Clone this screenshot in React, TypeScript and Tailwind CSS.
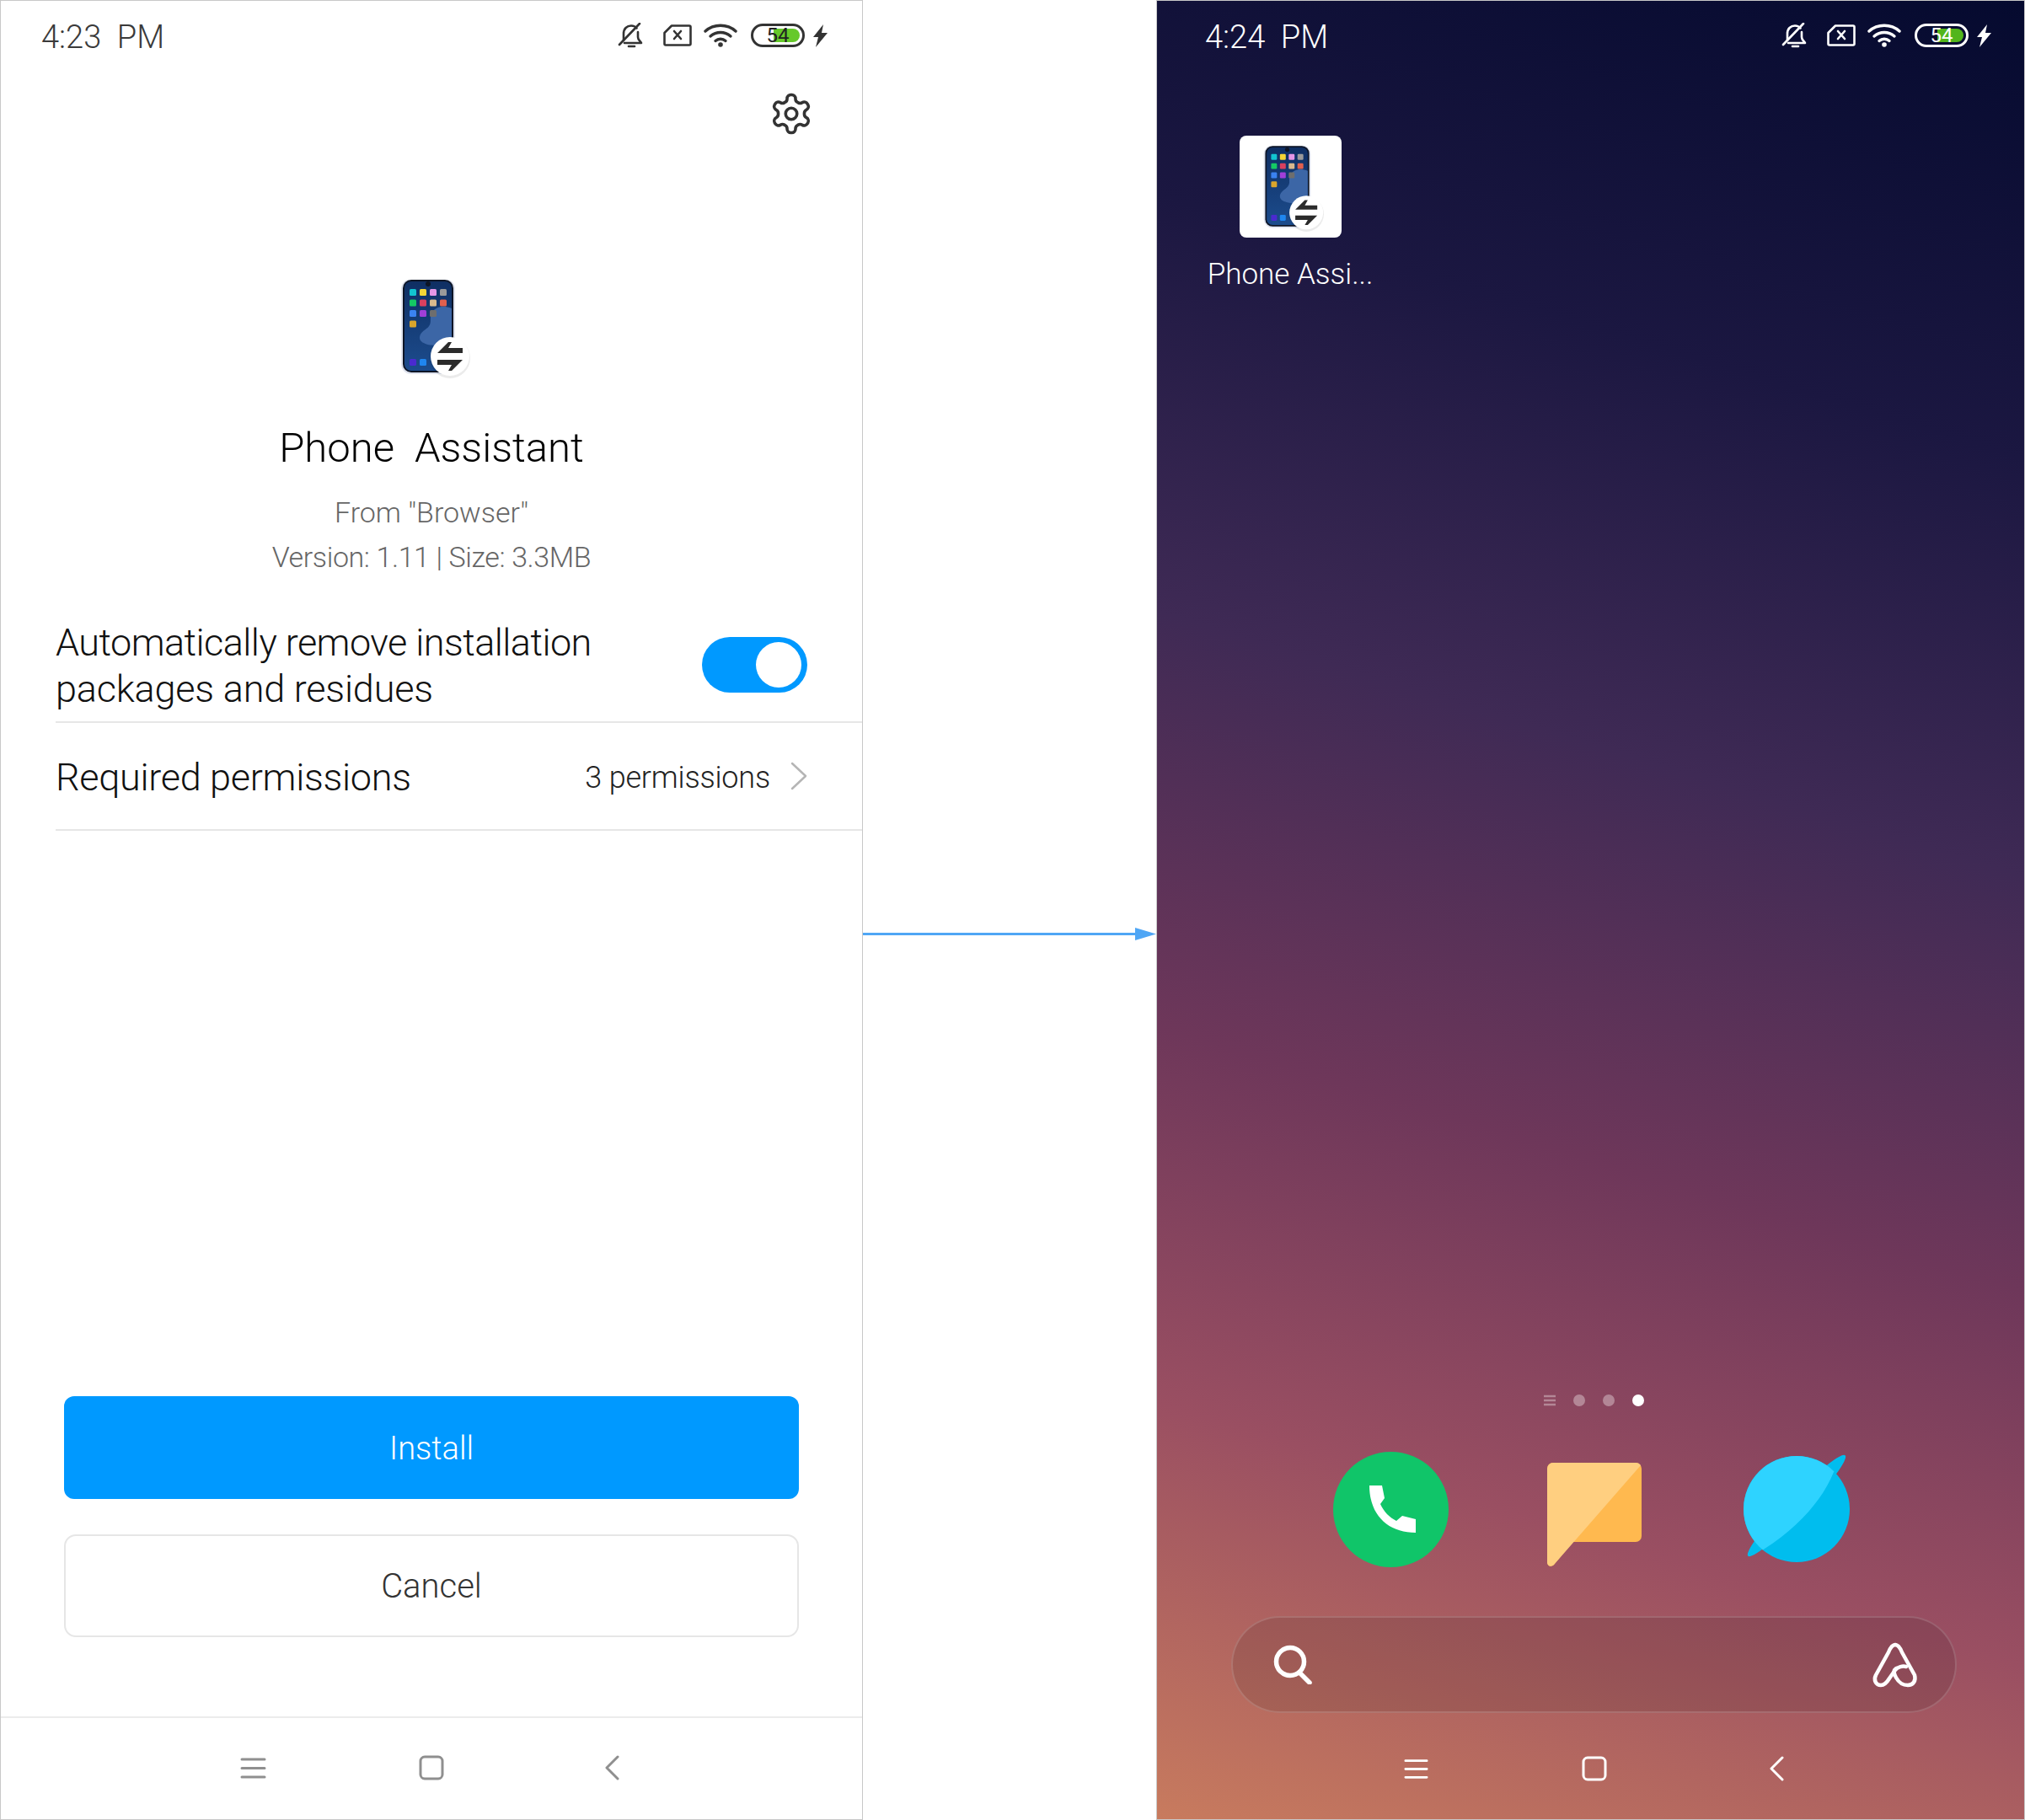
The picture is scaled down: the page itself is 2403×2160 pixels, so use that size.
import React from "react";

const font = { fontFamily: "Roboto, 'Liberation Sans', sans-serif" };

function Bell({ c }: { c: string }) {
  return (
    <svg width="31" height="30" viewBox="0 0 31 30" fill="none" stroke={c} strokeWidth="2.6" strokeLinecap="round" strokeLinejoin="round">
      <path d="M7 21V13C7 7 11 3.5 16 3.5c3 0 5 1 6.5 3" />
      <path d="M24 11v6c0 3 2 4 4 7H8" />
      <path d="M13 28h7" />
      <path d="M26 1 2 26" />
    </svg>
  );
}

function Card({ c }: { c: string }) {
  return (
    <svg width="34" height="26" viewBox="0 0 34 26" fill="none" stroke={c} strokeWidth="2.6" strokeLinecap="round" strokeLinejoin="round">
      <path d="M10 1.5H31a1.5 1.5 0 0 1 1.5 1.5V23a1.5 1.5 0 0 1-1.5 1.5H3A1.5 1.5 0 0 1 1.5 23V10Z" />
      <path d="m13 8 8 9M21 8l-8 9" />
    </svg>
  );
}

function Wifi({ c }: { c: string }) {
  return (
    <svg width="40" height="28" viewBox="0 0 40 28" fill="none" stroke={c} strokeWidth="3.4" strokeLinecap="round">
      <path d="M2 9C12 0 28 0 38 9" />
      <path d="M8 15c7-6 17-6 24 0" />
      <path d="M14 20.500c3.500-3 8.500-3 12 0" />
      <circle cx="20" cy="25" r="2.800" fill={c} stroke="none" />
    </svg>
  );
}

function Bolt({ c }: { c: string }) {
  return (
    <svg width="17" height="27" viewBox="0 0 17 27" fill={c}>
      <path d="M12 0 0 15h6L3 27 17 10h-7Z" />
    </svg>
  );
}

function StatusBar({ time, dark }: { time: string; dark: boolean }) {
  const c = dark ? "#333333" : "#ffffff";
  return (
    <div className={`flex h-[86px] items-center ${dark ? "pl-[48px] pr-[41px] text-[#3a3a3a]" : "pl-[57px] pr-[39px] text-white"}`}>
      <span className="text-[38px] font-light whitespace-pre">{time}</span>
      <div className="ml-auto flex items-center pb-[4px]">
        <Bell c={c} />
        <div className="ml-[23px]"><Card c={c} /></div>
        <div className="ml-[14px]"><Wifi c={c} /></div>
        <div className={`relative ml-[16px] flex h-[28px] w-[64px] items-center justify-center overflow-hidden rounded-full border-[3px] ${dark ? "border-[#333333]" : "border-white"}`}>
          <div className={`absolute top-[3px] bottom-[3px] left-[24px] right-[3px] rounded-r-full ${dark ? "bg-[#66c92a]" : "bg-[#52b51c]"}`} />
          <span className={`relative text-[24px] leading-none ${dark ? "text-[#222222]" : "text-white"}`}>54</span>
        </div>
        <div className="ml-[10px]"><Bolt c={c} /></div>
      </div>
    </div>
  );
}

function AppIcon({ className, id }: { className: string; id: string }) {
  const colors = [
    ["#12c4cf", "#f5d536", "#e596e6", "#9a9a9a"],
    ["#14c964", "#d9405f", "#d9b98d", "#e0604e"],
    ["#3a82f0", "#a03fd8", "#6e6e6e", ""],
    ["#d9a52c", "", "", ""],
  ];
  return (
    <svg viewBox="0 0 92 118" className={className}>
      <defs>
        <linearGradient id={id} x1="0" y1="0" x2="0" y2="1">
          <stop offset="0" stopColor="#0f2f63" />
          <stop offset="1" stopColor="#1c4c8d" />
        </linearGradient>
      </defs>
      <rect x="10" y="-1" width="64" height="113" rx="12" fill="#dfe3ee" />
      <rect x="12" y="0" width="60" height="110" rx="10" fill="#0d1526" />
      <rect x="14" y="2" width="56" height="106" rx="8" fill={`url(#${id})`} />
      <path d="M70 34c-10-4-20-2-24 6-3 7 2 12-6 18-4 3-8 6-8 11 0 7 14 10 24 9 8-1 14-3 14-8Z" fill="#3c66a6" />
      <circle cx="42" cy="5" r="3" fill="#0d1526" />
      {colors.map((row, r) =>
        row.map((col, i) =>
          col ? <rect key={`${r}-${i}`} x={20 + i * 12} y={11 + r * 12.500} width="8" height="8" rx="1.500" fill={col} /> : null,
        ),
      )}
      <rect x="20" y="94" width="8" height="8" rx="1.500" fill="#4a2ad0" />
      <rect x="32" y="94" width="8" height="8" rx="1.500" fill="#1f86f0" />
      <circle cx="68" cy="93" r="24" fill="#000000" opacity="0.08" />
      <circle cx="68" cy="91" r="23" fill="#ffffff" />
      <path d="M53 87h30v-6H66l4-7h-4Z" fill="#2b2b2b" />
      <path d="M83 95H53v6h17l-4 7h4Z" fill="#2b2b2b" />
    </svg>
  );
}

function NavIcons({ c, light }: { c: string; light: boolean }) {
  return (
    <div className="flex items-center">
      <svg width={light ? 29 : 31} height="27" viewBox="0 0 31 27" stroke={c} strokeWidth="3" strokeLinecap="round">
        <path d="M2 3h27M2 13.500h27M2 24h27" />
      </svg>
      <svg width="30" height="30" viewBox="0 0 30 30" fill="none" stroke={c} strokeWidth="3" className={light ? "ml-[182px]" : "ml-[181px]"}>
        <rect x="2" y="2" width="26" height="26" rx="5" />
      </svg>
      <svg width="19" height="30" viewBox="0 0 19 30" fill="none" stroke={c} strokeWidth="3" strokeLinecap="round" strokeLinejoin="round" className={light ? "ml-[192px]" : "ml-[190px]"}>
        <path d="M16 2 3 15l13 13" />
      </svg>
    </div>
  );
}

export default function App() {
  return (
    <div className="flex h-[2160px] w-[2403px] bg-white" style={font}>
      {/* left phone */}
      <div className="flex h-full w-[1024px] shrink-0 flex-col border border-[#c8c8c8] bg-white">
        <StatusBar time="4:23  PM" dark />
        <div className="mt-[21px] flex justify-end pr-[57px]">
          <svg width="54" height="54" viewBox="0 0 24 24" fill="none" stroke="#333333" strokeWidth="1.600" strokeLinecap="round" strokeLinejoin="round">
            <path d="M12.220 2h-.44a2 2 0 0 0-2 2v.18a2 2 0 0 1-1 1.730l-.43.250a2 2 0 0 1-2 0l-.15-.080a2 2 0 0 0-2.730.730l-.22.380a2 2 0 0 0 .730 2.730l.15.100a2 2 0 0 1 1 1.720v.510a2 2 0 0 1-1 1.740l-.15.090a2 2 0 0 0-.730 2.730l.22.380a2 2 0 0 0 2.730.730l.15-.080a2 2 0 0 1 2 0l.43.250a2 2 0 0 1 1 1.730V20a2 2 0 0 0 2 2h.44a2 2 0 0 0 2-2v-.18a2 2 0 0 1 1-1.730l.43-.250a2 2 0 0 1 2 0l.15.080a2 2 0 0 0 2.730-.730l.22-.390a2 2 0 0 0-.730-2.730l-.15-.080a2 2 0 0 1-1-1.740v-.500a2 2 0 0 1 1-1.740l.15-.090a2 2 0 0 0 .730-2.730l-.22-.380a2 2 0 0 0-2.730-.730l-.15.080a2 2 0 0 1-2 0l-.43-.250a2 2 0 0 1-1-1.730V4a2 2 0 0 0-2-2z" />
            <circle cx="12" cy="12" r="3" />
          </svg>
        </div>
        <div className="mt-[170px] flex justify-center">
          <AppIcon id="ph1" className="h-[118px] w-[92px]" />
        </div>
        <div className="mt-[52px] text-center text-[49px] font-light leading-[60px] text-[#000000] whitespace-pre">Phone  Assistant</div>
        <div className="mt-[20px] text-center text-[34px] font-light leading-[53px] text-[#666666]">
          <div>From "Browser"</div>
          <div className="tracking-[-0.4px]">Version: 1.11 | Size: 3.3MB</div>
        </div>
        <div className="mt-[47px] flex items-center justify-between pl-[65px] pr-[65px] pb-[11px]">
          <div className="text-[45px] font-light leading-[55px] text-[#111111]">
            <div className="tracking-[-0.55px]">Automatically remove installation</div>
            <div className="tracking-[-0.2px]">packages and residues</div>
          </div>
          <div className="mb-[3px] flex h-[66px] w-[125px] items-center justify-end rounded-full bg-[#0099ff] pr-[7px]">
            <div className="h-[54px] w-[54px] rounded-full bg-white" />
          </div>
        </div>
        <div className="ml-[65px] flex h-[130px] items-center justify-between border-y-2 border-[#e6e6e6] pr-[65px] pt-[4px]">
          <span className="text-[45px] font-light tracking-[-0.3px] text-[#111111]">Required permissions</span>
          <div className="flex items-center">
            <span className="text-[36px] font-light tracking-[-0.2px] text-[#222222]">3 permissions</span>
            <svg width="20" height="34" viewBox="0 0 20 34" fill="none" stroke="#b5b5b5" strokeWidth="2.500" strokeLinecap="round" strokeLinejoin="round" className="ml-[24px] mb-[4px]">
              <path d="m2 2 16 15L2 32" />
            </svg>
          </div>
        </div>
        <div className="mx-[75px] mt-auto flex h-[122px] items-center justify-center rounded-[12px] bg-[#0099ff] pt-[2px] text-[38px] font-light text-white">Install</div>
        <div className="mx-[75px] mt-[42px] flex h-[122px] items-center justify-center rounded-[14px] border-2 border-[#e6e6e6] pt-[2px] text-[40px] font-light text-[#333333]">Cancel</div>
        <div className="mt-[94px] flex h-[122px] items-start justify-center border-t-2 border-[#ececec] pr-[3px] pt-[44px]">
          <NavIcons c="#8f8f8f" light={false} />
        </div>
      </div>

      {/* arrow */}
      <div className="min-w-0 flex-1 pt-[1100px]">
        <svg width="348" height="16" viewBox="0 0 348 16" className="block">
          <path d="M0 7h326v3H0Z" fill="#4fa6f5" />
          <path d="M323 1 348 8.500 323 16Z" fill="#4fa6f5" />
        </svg>
      </div>

      {/* right phone */}
      <div className="flex h-full w-[1031px] shrink-0 flex-col border border-[#c8c8c8] bg-[linear-gradient(197deg,#050a2f_0%,#1b1741_22%,#3f2a55_42%,#6e375a_62%,#9a4f62_80%,#c87b5e_100%)]">
        <StatusBar time="4:24  PM" dark={false} />
        <div className="ml-[28px] mt-[74px] flex w-[260px] flex-col items-center">
          <div className="flex h-[121px] w-[121px] items-center justify-center rounded-[8px] bg-white pt-[5px]">
            <AppIcon id="ph2" className="h-[103px] w-[80px]" />
          </div>
          <div className="mt-[19px] text-[35px] font-light leading-[50px] text-white">Phone Assi...</div>
        </div>

        <div className="mt-auto flex items-center pl-[459px]">
          <svg width="14" height="14" viewBox="0 0 14 14" stroke="#ffffff" strokeOpacity="0.350" strokeWidth="2.500">
            <path d="M0 2h14M0 7h14M0 12h14" />
          </svg>
          <div className="ml-[21px] h-[14px] w-[14px] rounded-full bg-white/35" />
          <div className="ml-[21px] h-[14px] w-[14px] rounded-full bg-white/35" />
          <div className="ml-[21px] h-[14px] w-[14px] rounded-full bg-white" />
        </div>

        <div className="mt-[54px] flex items-start pl-[209px]">
          <svg width="137" height="137" viewBox="0 0 137 137">
            <circle cx="68.500" cy="68.500" r="68.500" fill="#10c569" />
            <path d="M43 40h15l3 15-5 7c4 9 11 16 19 20l7-6 16 4v16C66 96 43 76 43 40Z" fill="#ffffff" />
          </svg>
          <svg width="112" height="123" viewBox="0 0 112 123" className="ml-[117px] mt-[13px]">
            <path d="M7 0h98a7 7 0 0 1 7 7v80a7 7 0 0 1-7 7H30L8 121c-3 3-8 2-8-3V7a7 7 0 0 1 7-7Z" fill="#ffb94f" />
            <path d="M7 0h98a7 7 0 0 1 6 3L8 121c-3 3-8 2-8-3V7a7 7 0 0 1 7-7Z" fill="#ffcf80" />
          </svg>
          <svg width="126" height="126" viewBox="0 0 126 126" className="ml-[121px] mt-[5px] overflow-visible">
            <defs>
              <clipPath id="planetClip">
                <circle cx="63" cy="63" r="63" />
              </clipPath>
            </defs>
            <ellipse cx="63" cy="59" rx="83" ry="11" transform="rotate(-46 63 59)" fill="#00bdee" />
            <circle cx="63" cy="63" r="63" fill="#00bdee" />
            <path d="M0 0H126L107 19C95 50 65 85 25 110L0 126Z" fill="#2ed3ff" clipPath="url(#planetClip)" />
          </svg>
        </div>

        <div className="ml-[88px] mr-[80px] mt-[58px] flex h-[115px] items-center justify-between rounded-full border-2 border-white/15 bg-black/10 pl-[48px] pr-[43px]">
          <svg width="47" height="47" viewBox="0 0 47 47" fill="none" stroke="#ffffff" strokeWidth="5.500" strokeLinecap="round">
            <circle cx="20" cy="20" r="16.500" />
            <path d="m31 33 12 12" />
          </svg>
          <svg width="56" height="54" viewBox="0 0 56 54" fill="none" stroke="#ffffff" strokeWidth="4.500" strokeLinecap="round" strokeLinejoin="round">
            <path d="M28 3c-4 0-6 4-8 9L5 39c-3 6 0 12 6 12 4 0 7-3 10-8l7-10c3-4 9-5 13-4" />
            <path d="M28 3c4 0 6 4 8 9l15 27c2 7-2 12-8 12-6 0-10-2-14-9-3-5-3-9 0-11" />
          </svg>
        </div>

        <div className="mt-[51px] pb-[45px] pl-[293px]">
          <NavIcons c="#ffffff" light />
        </div>
      </div>
    </div>
  );
}
